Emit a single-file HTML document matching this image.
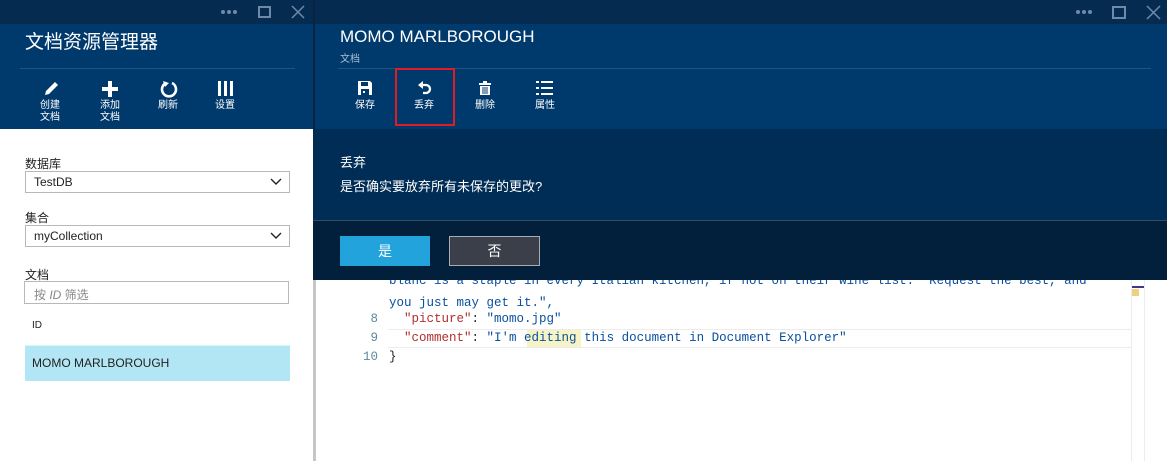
<!DOCTYPE html>
<html><head><meta charset="utf-8"><style>
*{margin:0;padding:0;box-sizing:border-box}
body{width:1167px;height:461px;overflow:hidden;background:#fff;position:relative;font-family:"Liberation Sans","Noto Sans CJK SC",sans-serif}
.a{position:absolute}
.top{background:#052c50;height:24px;top:0}
.hdr{background:#003a6c;top:24px;height:105px}
.lbl{color:#fff;font-size:10px;text-align:center;line-height:12px}
.w{color:#fff}
.mono{font-family:"Liberation Mono","DejaVu Sans Mono",monospace;font-size:12.5px;color:#0a4f9e;white-space:pre}
.k{color:#b22f2f}
.ln{color:#5a8a9a;text-align:right;width:30px}
</style></head><body>
<div class="a top" style="left:0;width:313px"></div>
<div class="a" style="left:0;top:24px;width:313px;height:105px;background:#003a6c"></div>
<div class="a w" style="left:25px;top:27px;font-size:19px">文档资源管理器</div>
<div class="a" style="left:20px;top:68px;width:275px;height:1px;background:#1a5585"></div>
<div class="a" style="left:221px;top:10px;width:4px;height:4px;border-radius:2px;background:#6f8aa8;box-shadow:6px 0 #6f8aa8,12px 0 #6f8aa8"></div>
<div class="a" style="left:258px;top:6px;width:13px;height:12px;border:2px solid #6f8aa8"></div>
<svg class="a" style="left:291px;top:5px" width="14" height="14"><path d="M1 1L13 13M13 1L1 13" stroke="#6f8aa8" stroke-width="1.5"/></svg>
<svg class="a" style="left:42px;top:80px" width="18" height="18"><path d="M3 15L4 11L13 2L16 5L7 14Z" fill="#fff"/></svg>
<div class="a lbl" style="left:36px;top:100px;width:28px">创建<br>文档</div>
<svg class="a" style="left:101px;top:80px" width="18" height="18"><path d="M7 1h4v6h6v4h-6v6h-4v-6h-6v-4h6z" fill="#fff"/></svg>
<div class="a lbl" style="left:96px;top:100px;width:28px">添加<br>文档</div>
<svg class="a" style="left:160px;top:80px" width="18" height="18"><path d="M6 3A7 7 0 1 0 12 3" stroke="#fff" stroke-width="2.6" fill="none"/><path d="M3 1L9 3L5 7Z" fill="#fff"/></svg>
<div class="a lbl" style="left:154px;top:100px;width:28px">刷新</div>
<svg class="a" style="left:217px;top:80px" width="18" height="18"><rect x="1" y="1" width="3" height="15" fill="#fff"/><rect x="7" y="1" width="3" height="15" fill="#fff"/><rect x="13" y="1" width="3" height="15" fill="#fff"/></svg>
<div class="a lbl" style="left:211px;top:100px;width:28px">设置</div>
<div class="a" style="left:25px;top:155px;font-size:12px;color:#222">数据库</div>
<div class="a" style="left:25px;top:171px;width:265px;height:22px;border:1px solid #b8b8b8;font-size:12px;padding:3px 0 0 8px;color:#222">TestDB</div>
<svg class="a" style="left:270px;top:178px" width="12" height="8"><path d="M1 1L6 6L11 1" stroke="#222" stroke-width="1.4" fill="none"/></svg>
<div class="a" style="left:25px;top:209px;font-size:12px;color:#222">集合</div>
<div class="a" style="left:25px;top:225px;width:265px;height:22px;border:1px solid #b8b8b8;font-size:12px;padding:3px 0 0 8px;color:#222">myCollection</div>
<svg class="a" style="left:270px;top:232px" width="12" height="8"><path d="M1 1L6 6L11 1" stroke="#222" stroke-width="1.4" fill="none"/></svg>
<div class="a" style="left:25px;top:266px;font-size:12px;color:#222">文档</div>
<div class="a" style="left:24px;top:281px;width:265px;height:23px;border:1px solid #b8b8b8;font-size:12px;padding:4px 0 0 9px;color:#888">按 <i>ID</i> 筛选</div>
<div class="a" style="left:32px;top:320px;font-size:10px;color:#222">ID</div>
<div class="a" style="left:25px;top:345px;width:265px;height:36px;background:#b2e6f5;border-top:1px solid #cfe;font-size:12px;padding:10px 0 0 7px;color:#222">MOMO MARLBOROUGH</div>
<div class="a" style="left:313px;top:129px;width:3px;height:332px;background:#c6c6c6"></div>
<div class="a top" style="left:313px;width:854px;border-left:2px solid #0a2440"></div>
<div class="a hdr" style="left:313px;width:854px;border-left:2px solid #0a2440"></div>
<div class="a w" style="left:340px;top:27px;font-size:17px">MOMO MARLBOROUGH</div>
<div class="a" style="left:340px;top:50px;font-size:10px;color:#a9bfd4">文档</div>
<div class="a" style="left:338px;top:68px;width:813px;height:1px;background:#1a5585"></div>
<div class="a" style="left:1076px;top:10px;width:4px;height:4px;border-radius:2px;background:#6f8aa8;box-shadow:6px 0 #6f8aa8,12px 0 #6f8aa8"></div>
<div class="a" style="left:1112px;top:6px;width:14px;height:13px;border:2px solid #6f8aa8"></div>
<svg class="a" style="left:1146px;top:5px" width="15" height="15"><path d="M1 1L14 14M14 1L1 14" stroke="#6f8aa8" stroke-width="1.5"/></svg>
<svg class="a" style="left:357px;top:80px" width="16" height="16"><path d="M1 1h12l2 2v12h-14z" fill="#fff"/><rect x="4" y="2" width="7" height="4" fill="#003a6c"/><rect x="4" y="9" width="8" height="6" fill="#003a6c"/><rect x="6" y="11" width="2" height="2" fill="#fff"/></svg>
<div class="a lbl" style="left:351px;top:100px;width:28px">保存</div>
<div class="a" style="left:395px;top:68px;width:60px;height:58px;border:2px solid #e01c24"></div>
<svg class="a" style="left:416px;top:80px" width="18" height="16"><path d="M4 5H10A4 4 0 0 1 10 13H7" stroke="#fff" stroke-width="2.3" fill="none"/><path d="M2 5L7 1V9Z" fill="#fff"/></svg>
<div class="a lbl" style="left:410px;top:100px;width:28px">丢弃</div>
<svg class="a" style="left:478px;top:81px" width="14" height="15"><rect x="1" y="2" width="12" height="2" fill="#fff"/><rect x="5" y="0" width="4" height="2" fill="#fff"/><path d="M2 5h10v9h-10z" fill="#fff"/><path d="M5 6v7M7 6v7M9 6v7" stroke="#003a6c"/></svg>
<div class="a lbl" style="left:471px;top:100px;width:28px">删除</div>
<svg class="a" style="left:536px;top:80px" width="18" height="16"><g fill="#fff"><rect x="0" y="1" width="3" height="2"/><rect x="5" y="1" width="12" height="2"/><rect x="0" y="7" width="3" height="2"/><rect x="5" y="7" width="12" height="2"/><rect x="0" y="13" width="3" height="2"/><rect x="5" y="13" width="12" height="2"/></g></svg>
<div class="a lbl" style="left:531px;top:100px;width:28px">属性</div>
<div class="a" style="left:313px;top:129px;width:854px;height:91px;background:#002d55"></div>
<div class="a w" style="left:340px;top:152px;font-size:13px">丢弃</div>
<div class="a w" style="left:340px;top:176px;font-size:13px">是否确实要放弃所有未保存的更改?</div>
<div class="a" style="left:313px;top:220px;width:854px;height:60px;background:#02203c;border-top:1px solid #3a4a5c"></div>
<div class="a w" style="left:340px;top:236px;width:90px;height:30px;background:#23a3dc;font-size:14px;text-align:center;line-height:30px">是</div>
<div class="a w" style="left:449px;top:236px;width:91px;height:30px;background:#3a3f4a;border:1px solid #a7abb2;font-size:14px;text-align:center;line-height:28px">否</div>
<div class="a mono" style="left:389px;top:274px;clip-path:inset(6px 0 0 0)">blanc is a staple in every Italian kitchen, if not on their wine list.  Request the best, and</div>
<div class="a mono" style="left:389px;top:296px">you just may get it.",</div>
<div class="a" style="left:388px;top:329px;width:743px;height:19px;border-top:1px solid #ececec;border-bottom:1px solid #ececec"></div>
<div class="a mono ln" style="left:348px;top:312px">8</div>
<div class="a mono" style="left:389px;top:312px">  <span class="k">"picture"</span><span style="color:#222">:</span> "momo.jpg"</div>
<div class="a mono ln" style="left:348px;top:331px">9</div>
<div class="a" style="left:527px;top:330px;width:54px;height:17px;background:#f6f4c6"></div>
<div class="a mono" style="left:389px;top:331px">  <span class="k">"comment"</span><span style="color:#222">:</span> "I'm editing this document in Document Explorer"</div>
<div class="a mono ln" style="left:348px;top:350px">10</div>
<div class="a mono" style="left:389px;top:350px;color:#222">}</div>
<div class="a" style="left:1131px;top:280px;width:14px;height:181px;border-left:1px solid #ececec;border-right:1px solid #ececec"></div>
<div class="a" style="left:1132px;top:286px;width:12px;height:2px;background:#3a3a8a"></div>
<div class="a" style="left:1132px;top:289px;width:7px;height:7px;background:#f0d080"></div>
</body></html>
